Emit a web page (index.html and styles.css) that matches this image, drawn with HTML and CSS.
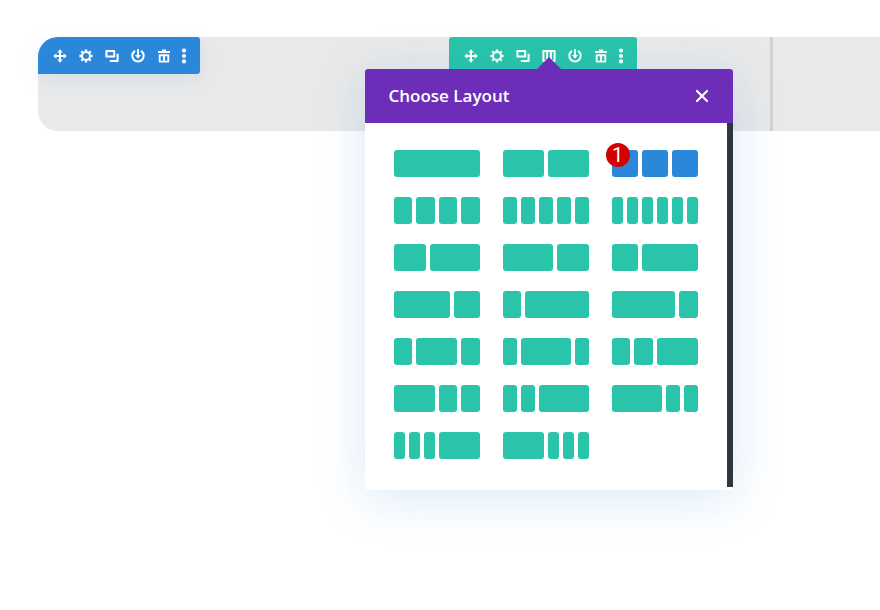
FILE: index.html
```html
<!DOCTYPE html>
<html lang="en">
<head>
    <meta charset="utf-8">
    <title>Page Builder</title>
    <meta name="viewport" content="width=device-width, initial-scale=1">
    <link rel="stylesheet" href="styles.css">
</head>
<body>
    <!-- Icons shared by both toolbars -->
    <svg class="icon-defs" aria-hidden="true">
        <symbol id="icon-move" viewBox="0 0 14 14">
            <path d="M7 2.5v9M2.5 7h9" stroke="currentColor" stroke-width="2"/>
            <path d="M7 .2l2.8 3.2H4.2zM7 13.8l2.8-3.2H4.2zM.2 7l3.2-2.8v5.6zM13.8 7l-3.2-2.8v5.6z" fill="currentColor"/>
        </symbol>
        <symbol id="icon-settings" viewBox="0 0 14 14">
            <circle cx="7" cy="7" r="4" fill="none" stroke="currentColor" stroke-width="2"/>
            <path d="M7 .4v2.4M7 11.2v2.4M.4 7h2.4M11.2 7h2.4M2.3 2.3L4 4M10 10l1.7 1.7M11.7 2.3L10 4M4 10l-1.7 1.7" stroke="currentColor" stroke-width="2.3"/>
        </symbol>
        <symbol id="icon-duplicate" viewBox="0 0 14 14">
            <path d="M1.4 1.9h7.8v5.6H1.4z" fill="none" stroke="currentColor" stroke-width="2" stroke-linejoin="round"/>
            <path d="M12.6 4.8v7.2H4.8" fill="none" stroke="currentColor" stroke-width="2.1" stroke-linejoin="round"/>
        </symbol>
        <symbol id="icon-columns" viewBox="0 0 14 14">
            <path d="M1.4 2h11.2v10H1.4zM5.1 2v10M8.9 2v10" fill="none" stroke="currentColor" stroke-width="2" stroke-linejoin="round"/>
        </symbol>
        <symbol id="icon-save" viewBox="0 0 14 14">
            <path d="M3.4 2.4a5.7 5.7 0 1 0 7.2 0" fill="none" stroke="currentColor" stroke-width="2" stroke-linecap="round"/>
            <path d="M7 .8v6" stroke="currentColor" stroke-width="1.9" stroke-linecap="round"/>
            <path d="M4 6h6L7 9.8z" fill="currentColor"/>
        </symbol>
        <symbol id="icon-delete" viewBox="0 0 14 14">
            <path d="M5 .5h4v1.6h3.9v2H1.1v-2H5z" fill="currentColor"/>
            <path d="M2.7 6.2h8.6v6.4H2.7zM7 6v6" fill="none" stroke="currentColor" stroke-width="1.9" stroke-linejoin="round"/>
        </symbol>
        <symbol id="icon-more" viewBox="0 0 6 16">
            <circle cx="3" cy="2.6" r="2.1" fill="currentColor"/>
            <circle cx="3" cy="8" r="2.1" fill="currentColor"/>
            <circle cx="3" cy="13.4" r="2.1" fill="currentColor"/>
        </symbol>
    </svg>

    <main class="section">
        <div class="section-cell">
            <div class="toolbar toolbar-section">
                <button class="tool" aria-label="Move section"><svg class="icon"><use href="#icon-move"/></svg></button>
                <button class="tool" aria-label="Section settings"><svg class="icon"><use href="#icon-settings"/></svg></button>
                <button class="tool" aria-label="Duplicate section"><svg class="icon"><use href="#icon-duplicate"/></svg></button>
                <button class="tool" aria-label="Save section"><svg class="icon"><use href="#icon-save"/></svg></button>
                <button class="tool" aria-label="Delete section"><svg class="icon"><use href="#icon-delete"/></svg></button>
                <button class="tool tool-more" aria-label="More section options"><svg class="icon-more"><use href="#icon-more"/></svg></button>
            </div>
        </div>

        <div class="section-cell section-row">
            <div class="toolbar toolbar-row">
                <button class="tool" aria-label="Move row"><svg class="icon"><use href="#icon-move"/></svg></button>
                <button class="tool" aria-label="Row settings"><svg class="icon"><use href="#icon-settings"/></svg></button>
                <button class="tool" aria-label="Duplicate row"><svg class="icon"><use href="#icon-duplicate"/></svg></button>
                <div class="tool-anchor">
                    <button class="tool" aria-label="Change column structure"><svg class="icon"><use href="#icon-columns"/></svg></button>

                    <div class="popover" role="dialog" aria-labelledby="popover-title">
                        <div class="popover-header">
                            <h1 class="popover-title" id="popover-title">Choose Layout</h1>
                            <button class="close" aria-label="Close">
                                <svg class="icon-close" viewBox="0 0 14 14"><path d="M2 2l10 10M12 2L2 12" stroke="currentColor" stroke-width="2.2" stroke-linecap="round"/></svg>
                            </button>
                        </div>
                        <div class="popover-body">
                            <div class="layouts">
                                <button class="layout cols-1" aria-label="1 column"><i></i></button>
                                <button class="layout cols-2" aria-label="2 columns"><i></i><i></i></button>
                                <button class="layout cols-3 selected" aria-label="3 columns"><i></i><i></i><i></i><span class="badge">1</span></button>

                                <button class="layout cols-4" aria-label="4 columns"><i></i><i></i><i></i><i></i></button>
                                <button class="layout cols-5" aria-label="5 columns"><i></i><i></i><i></i><i></i><i></i></button>
                                <button class="layout cols-6" aria-label="6 columns"><i></i><i></i><i></i><i></i><i></i><i></i></button>

                                <button class="layout cols-5" aria-label="2/5, 3/5"><i class="span-2"></i><i class="span-3"></i></button>
                                <button class="layout cols-5" aria-label="3/5, 2/5"><i class="span-3"></i><i class="span-2"></i></button>
                                <button class="layout cols-3" aria-label="1/3, 2/3"><i></i><i class="span-2"></i></button>

                                <button class="layout cols-3" aria-label="2/3, 1/3"><i class="span-2"></i><i></i></button>
                                <button class="layout cols-4" aria-label="1/4, 3/4"><i></i><i class="span-3"></i></button>
                                <button class="layout cols-4" aria-label="3/4, 1/4"><i class="span-3"></i><i></i></button>

                                <button class="layout cols-4" aria-label="1/4, 1/2, 1/4"><i></i><i class="span-2"></i><i></i></button>
                                <button class="layout cols-5" aria-label="1/5, 3/5, 1/5"><i></i><i class="span-3"></i><i></i></button>
                                <button class="layout cols-4" aria-label="1/4, 1/4, 1/2"><i></i><i></i><i class="span-2"></i></button>

                                <button class="layout cols-4" aria-label="1/2, 1/4, 1/4"><i class="span-2"></i><i></i><i></i></button>
                                <button class="layout cols-5" aria-label="1/5, 1/5, 3/5"><i></i><i></i><i class="span-3"></i></button>
                                <button class="layout cols-5" aria-label="3/5, 1/5, 1/5"><i class="span-3"></i><i></i><i></i></button>

                                <button class="layout cols-6" aria-label="1/6, 1/6, 1/6, 1/2"><i></i><i></i><i></i><i class="span-3"></i></button>
                                <button class="layout cols-6" aria-label="1/2, 1/6, 1/6, 1/6"><i class="span-3"></i><i></i><i></i><i></i></button>
                            </div>
                            <div class="scrollbar"></div>
                        </div>
                    </div>
                </div>
                <button class="tool" aria-label="Save row"><svg class="icon"><use href="#icon-save"/></svg></button>
                <button class="tool" aria-label="Delete row"><svg class="icon"><use href="#icon-delete"/></svg></button>
                <button class="tool tool-more" aria-label="More row options"><svg class="icon-more"><use href="#icon-more"/></svg></button>
            </div>
        </div>

        <div class="section-cell"></div>
    </main>
</body>
</html>
```

FILE: styles.css
```css
* {
    box-sizing: border-box;
}
body {
    margin: 0;
    min-height: 100vh;
    padding: 37px 0 0 38px;
    background: #fff;
    font-family: "Open Sans", "Noto Sans", sans-serif;
}
button {
    border: none;
    padding: 0;
    background: none;
    color: inherit;
    cursor: pointer;
}
.icon-defs {
    display: none;
}
.section {
    display: grid;
    grid-template-columns: 277fr 458fr 107fr;
    min-height: 94px;
    background: #e9e9e9;
    border-radius: 20px 0 0 20px;
}
.section-cell {
    display: flex;
    align-items: flex-start;
}
.section-row {
    justify-content: center;
    border-right: 3px solid #d2d2d2;
}

/* Toolbars */
.toolbar {
    display: flex;
    padding: 0 9px;
    color: #fff;
}
.toolbar-section {
    background: #2b87da;
    border-radius: 20px 3px 3px 0;
    box-shadow: 0 5px 20px rgba(43, 135, 218, 0.1);
}
.toolbar-row {
    background: #29c4a9;
    border-radius: 3px;
}
.tool {
    display: flex;
    align-items: center;
    justify-content: center;
    width: 26px;
    height: 37px;
}
.tool-more {
    width: 14px;
}
.icon {
    width: 14px;
    height: 14px;
}
.icon-more {
    width: 6px;
    height: 16px;
}

/* Layout picker */
.tool-anchor {
    position: relative;
}
.popover {
    position: absolute;
    top: 32px;
    left: 50%;
    width: 368px;
    transform: translateX(-50%);
    background: #fff;
    border-radius: 3px;
    box-shadow: 0 8px 50px rgba(43, 135, 218, 0.18);
}
.popover::before {
    content: "";
    position: absolute;
    bottom: 100%;
    left: 50%;
    margin-left: -12px;
    border: 12px solid transparent;
    border-top: none;
    border-bottom-color: #6c2eb9;
}
.popover-header {
    display: flex;
    align-items: center;
    justify-content: space-between;
    height: 54px;
    padding: 0 24px;
    background: #6c2eb9;
    border-radius: 3px 3px 0 0;
}
.popover-title {
    margin: 0;
    font-size: 17px;
    font-weight: 600;
    line-height: 24px;
}
.close {
    display: flex;
}
.icon-close {
    width: 14px;
    height: 14px;
}
.popover-body {
    display: flex;
}
.layouts {
    flex: 1;
    display: grid;
    grid-template-columns: repeat(3, 1fr);
    gap: 20px 23px;
    padding: 27px 29px 31px;
}
.scrollbar {
    width: 6px;
    margin-bottom: 3px;
    background: #2f373d;
}
.layout {
    position: relative;
    display: grid;
    gap: 4px;
    height: 27px;
}
.layout i {
    height: 27px;
    background: #29c4a9;
    border-radius: 3px;
}
.selected i {
    background: #2b87da;
}
.cols-1 { grid-template-columns: 1fr; }
.cols-2 { grid-template-columns: repeat(2, 1fr); }
.cols-3 { grid-template-columns: repeat(3, 1fr); }
.cols-4 { grid-template-columns: repeat(4, 1fr); }
.cols-5 { grid-template-columns: repeat(5, 1fr); }
.cols-6 { grid-template-columns: repeat(6, 1fr); }
.span-2 { grid-column: span 2; }
.span-3 { grid-column: span 3; }
.badge {
    position: absolute;
    top: -7px;
    left: -6px;
    width: 24px;
    height: 24px;
    border-radius: 50%;
    background: #d20000;
    color: #fff;
    font-family: Roboto, sans-serif;
    font-size: 20px;
    line-height: 24px;
    text-align: center;
}
```
